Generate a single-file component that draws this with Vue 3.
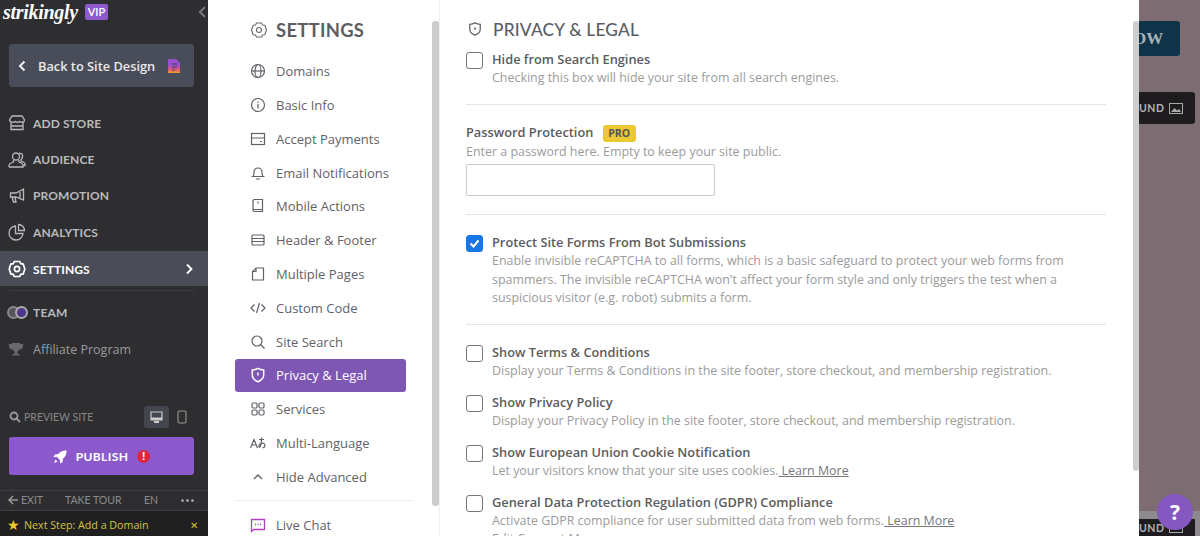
<template>
  <div class="page">
    <aside class="sidebar">
      <div class="brand">
        <span class="logo">strikingly</span>
        <span class="vip">VIP</span>
        <svg class="collapse" width="10" height="14" viewBox="0 0 10 14"><path d="M8 2 3 7l5 5" fill="none" stroke="#77797d" stroke-width="2"/></svg>
      </div>
      <button class="back">
        <svg width="10" height="14" viewBox="0 0 10 14"><path d="M7.5 2.5 3 7l4.500 4.500" fill="none" stroke="#eee" stroke-width="2"/></svg>
        <span>Back to Site Design</span>
        <svg class="page-ico" width="14" height="16" viewBox="0 0 14 16">
          <defs>
            <linearGradient id="pg" x1="0" y1="0" x2="0" y2="1">
              <stop offset="0.45" stop-color="#9a4fd0"/>
              <stop offset="0.75" stop-color="#e0567a"/>
              <stop offset="1" stop-color="#f0a030"/>
            </linearGradient>
          </defs>
          <path d="M1 1h8l4 4v10H1z" fill="url(#pg)"/>
          <path d="M5 6h5M5 9h5M5 12h3" stroke="#3a3d4a" stroke-width="1"/>
        </svg>
      </button>

      <nav class="main-nav">
        <a v-for="item in mainNav" :key="item.label" class="main-item" :class="{ active: item.active }">
          <svg width="18" height="18" viewBox="0 0 18 18" fill="none" stroke="currentColor" stroke-width="1.300" v-html="item.icon"></svg>
          <span>{{ item.label }}</span>
          <svg v-if="item.active" class="go" width="8" height="12" viewBox="0 0 8 12"><path d="M2 1.500 6.500 6 2 10.500" fill="none" stroke="#fff" stroke-width="1.800"/></svg>
        </a>
      </nav>
      <div class="side-sep"></div>
      <a class="team">
        <span class="avatars"><i class="av a1"></i><i class="av a2"></i></span>
        <span>TEAM</span>
      </a>
      <a class="affiliate">
        <svg width="16" height="16" viewBox="0 0 16 16" fill="#66686b"><path d="M4 1h8v1h3v2.500c0 1.500-1.200 2.800-3.300 3-.6 1-1.400 1.600-2.200 1.800V12h2v1.500H4.500V12h2V9.300c-.8-.2-1.600-.8-2.200-1.800C2.200 7.300 1 6 1 4.500V2h3z"/></svg>
        <span>Affiliate Program</span>
      </a>

      <div class="preview">
        <svg width="12" height="12" viewBox="0 0 12 12" fill="none" stroke="#9a9b9e" stroke-width="1.800"><circle cx="5" cy="5" r="3.500"/><path d="m7.500 7.500 3.500 3.500"/></svg>
        <span class="preview-text">PREVIEW SITE</span>
        <span class="device on">
          <svg width="13" height="13" viewBox="0 0 13 13"><path d="M1 1h11v8H1z" fill="none" stroke="#ccc" stroke-width="1.200"/><path d="M1 6.500h11V9H1zM4 10h5v2H4z" fill="#ccc"/></svg>
        </span>
        <span class="device">
          <svg width="10" height="14" viewBox="0 0 10 14"><rect x="1" y="1" width="8" height="12" rx="1.500" fill="none" stroke="#999" stroke-width="1.100"/></svg>
        </span>
      </div>
      <button class="publish">
        <svg width="14" height="14" viewBox="0 0 14 14" fill="#fff"><path d="M13.500.5c.2 3.500-1 6.300-3.500 8.200L9.500 12 7 13.500V10L4 7H.5L2 4.500l3.300-.5C7.200 1.500 10 .3 13.500.5z"/><path d="M2.500 9.500 1 13l3.500-1.500z"/></svg>
        <span>PUBLISH</span>
        <i class="alert">!</i>
      </button>
      <div class="tools">
        <span class="exit">
          <svg width="10" height="10" viewBox="0 0 10 10" fill="none" stroke="#999" stroke-width="1.500"><path d="M5 1 1 5l4 4M1 5h9"/></svg>
          EXIT
        </span>
        <span>TAKE TOUR</span>
        <span>EN</span>
        <span class="dots"><i></i><i></i><i></i></span>
      </div>
      <div class="next">
        <span class="star">★</span>
        <span class="next-text">Next Step: Add a Domain</span>
        <span class="close">✕</span>
      </div>
    </aside>

    <section class="modal">
      <div class="settings-nav">
        <h2 class="settings-title">
          <svg width="18" height="18" viewBox="0 0 18 18" fill="none" stroke="#666" stroke-width="1.100"><path d="M6.500 2h5l1 2 2.300.3L16.500 9l-1.700 4.700-2.300.3-1 2h-5l-1-2-2.300-.3L1.500 9l1.700-4.700L5.500 4z"/><circle cx="9" cy="9" r="2.500"/></svg>
          <span>SETTINGS</span>
        </h2>
        <a v-for="item in settingsNav" :key="item.label" class="set-item" :class="{ active: item.active }">
          <svg width="16" height="16" viewBox="0 0 16 16" fill="none" stroke="currentColor" stroke-width="1.200" v-html="item.icon"></svg>
          <span>{{ item.label }}</span>
        </a>
        <div class="set-sep"></div>
        <a class="set-item">
          <svg width="16" height="16" viewBox="0 0 16 16" fill="none" stroke="#b13fc0" stroke-width="1.300"><path d="M1.500 2.500h13v10H4l-2.500 2z"/><path d="M5 7.500h1M7.500 7.500h1M10 7.500h1" stroke="#7a4fc0"/></svg>
          <span>Live Chat</span>
        </a>
        <div class="thumb nav-thumb"></div>
      </div>

      <div class="content">
        <h2 class="content-title">
          <svg width="14" height="14" viewBox="0 0 16 16" fill="none" stroke="#666" stroke-width="1.500"><path d="M8 1c2 1.200 3.800 1.600 6 1.700v5.500c0 3-2.500 5.500-6 6.800-3.500-1.300-6-3.800-6-6.800V2.700C4.200 2.600 6 2.200 8 1z"/><path d="M8 6v3"/></svg>
          <span>PRIVACY &amp; LEGAL</span>
        </h2>

        <label class="check first">
          <i class="box"></i>
          <span>
            <b>Hide from Search Engines</b>
            <small>Checking this box will hide your site from all search engines.</small>
          </span>
        </label>
        <hr class="first-line" />

        <div class="password">
          <b>Password Protection <em class="pro">PRO</em></b>
          <small>Enter a password here. Empty to keep your site public.</small>
          <input class="pass-input" type="text" />
        </div>
        <hr class="second-line" />

        <label class="check recaptcha">
          <i class="box on">
            <svg width="13" height="13" viewBox="0 0 13 13"><path d="m2.500 6.500 3 3 5-6" fill="none" stroke="#fff" stroke-width="2"/></svg>
          </i>
          <span>
            <b>Protect Site Forms From Bot Submissions</b>
            <small>Enable invisible reCAPTCHA to all forms, which is a basic safeguard to protect your web forms from spammers. The invisible reCAPTCHA won't affect your form style and only triggers the test when a suspicious visitor (e.g. robot) submits a form.</small>
          </span>
        </label>
        <hr class="third-line" />

        <div class="list">
          <label v-for="row in checks" :key="row.title" class="check">
            <i class="box"></i>
            <span>
              <b>{{ row.title }}</b>
              <small>{{ row.text }}<a v-if="row.more" class="more"> Learn More</a></small>
              <small v-if="row.extra">{{ row.extra }}</small>
            </span>
          </label>
        </div>
        <div class="thumb content-thumb"></div>
      </div>
    </section>

    <div class="backdrop">
      <span class="cta"><span>OW</span></span>
      <span class="bg-btn">
        <span>UND</span>
        <svg width="14" height="11" viewBox="0 0 14 11"><rect x=".5" y=".5" width="13" height="10" fill="none" stroke="#aaa"/><path d="m2 9 3.500-4 2.500 2.500L10 6l2 3z" fill="#aaa"/></svg>
      </span>
      <div class="bottom-band">
        <span class="bg-btn low">
          <span>UND</span>
          <svg width="14" height="11" viewBox="0 0 14 11"><rect x=".5" y=".5" width="13" height="10" fill="none" stroke="#aaa"/></svg>
        </span>
      </div>
      <span class="help">?</span>
    </div>
  </div>
</template>

<script setup>
const mainNav = [
  { label: 'ADD STORE', icon: '<path d="M4 2h10l2.500 4c0 1.500-1.300 2.200-2.500 2-1 .4-2 .3-2.500-.5-1 1-3 1-4 0-.5.8-1.500.9-2.500.500C3 8.200 1.500 7.500 1.500 6zM3 8.500V15.500h12V8.500M3 12h12"/>' },
  { label: 'AUDIENCE', icon: '<circle cx="8" cy="5.500" r="3.500"/><path d="M1 16v-1.500c0-2 3-3 4.500-3.500V9M11 9v2c1.500.5 4 1.500 4 3.500V16H1M11 2.500c3-.5 4 1 3.500 3.500-.2 1-.7 2-1.500 2.500V10c1.500.5 4 1.500 4 3v1.500h-2"/>' },
  { label: 'PROMOTION', icon: '<path d="M15.500 2v11L8 10H2.500V6H8zM4 10l1.500 5H8l-1-5M12 3.500v8"/>' },
  { label: 'ANALYTICS', icon: '<path d="M7.500 3a7 7 0 1 0 7.500 7.500H7.500z"/><path d="M10.500 1.500a6 6 0 0 1 6 6h-6z"/>' },
  { label: 'SETTINGS', active: true, icon: '<path stroke-width="1.700" d="M6.300 1.500h5.400l1.100 2.200 2.400.4L16.800 9l-1.600 4.900-2.400.4-1.100 2.200H6.300l-1.100-2.200-2.400-.4L1.200 9l1.600-4.900 2.400-.4z"/><circle stroke-width="1.700" cx="9" cy="9" r="2.600"/>' },
]

const settingsNav = [
  { label: 'Domains', icon: '<circle cx="8" cy="8" r="6.500"/><ellipse cx="8" cy="8" rx="3" ry="6.500"/><path d="M1.500 8h13"/>' },
  { label: 'Basic Info', icon: '<circle cx="8" cy="8" r="6.500"/><path d="M8 7v4.500M8 4.500v1.200"/>' },
  { label: 'Accept Payments', icon: '<rect x="1.500" y="2.500" width="13" height="11"/><path d="M1.500 7h13M10 10.500h2"/>' },
  { label: 'Email Notifications', icon: '<path d="M3 11.500c1-1 1-2.500 1-4.500a4 4 0 0 1 8 0c0 2 0 3.500 1 4.500zM1.500 11.500h13M6 14h4"/>' },
  { label: 'Mobile Actions', icon: '<path d="M4 1.500h8.500v12H4.500a1.500 1.500 0 0 1-1.500-1.500V2.500zM3 11.500h9.500M8 3.500v2"/>' },
  { label: 'Header & Footer', icon: '<rect x="2" y="3" width="12" height="10" rx="1"/><path d="M2 6.500h12M2 9.500h12"/>' },
  { label: 'Multiple Pages', icon: '<path d="M6 2h7.500v12h-11V5.500zM6 2v3.500H2.500"/>' },
  { label: 'Custom Code', icon: '<path d="M4.500 4.500 1 8l3.500 3.500M11.500 4.500 15 8l-3.500 3.500M9.500 3l-3 10"/>' },
  { label: 'Site Search', icon: '<circle cx="7" cy="7" r="5"/><path d="m10.500 10.500 4 4"/>' },
  { label: 'Privacy & Legal', active: true, icon: '<path stroke-width="1.500" d="M8 1.300c2 1.200 3.800 1.600 5.700 1.700v5c0 3-2.200 5.300-5.700 6.700C4.500 13.300 2.300 11 2.300 8V3C4.200 2.900 6 2.500 8 1.300z"/><path stroke-width="1.500" d="M8 5.500v3"/>' },
  { label: 'Services', icon: '<rect x="2" y="2" width="5" height="5" rx="1.200"/><rect x="9" y="2" width="5" height="5" rx="1.200"/><rect x="2" y="9" width="5" height="5" rx="1.200"/><rect x="9" y="9" width="5" height="5" rx="1.200"/>' },
  { label: 'Multi-Language', icon: '<path d="M.5 13 4 4.500 7.500 13M2 10h4M9 4.500h5M11.500 2.500c0 4-.5 8-1.500 9.500-1 1-1.500-1-.5-2.500 1.500-2 5-2 5.500.5.200 1.500-1 2.500-2.500 3"/>' },
  { label: 'Hide Advanced', icon: '<path stroke-width="1.400" d="M4 10l4-4 4 4"/>' },
]

const checks = [
  { title: 'Show Terms & Conditions', text: 'Display your Terms & Conditions in the site footer, store checkout, and membership registration.' },
  { title: 'Show Privacy Policy', text: 'Display your Privacy Policy in the site footer, store checkout, and membership registration.' },
  { title: 'Show European Union Cookie Notification', text: 'Let your visitors know that your site uses cookies.', more: true },
  { title: 'General Data Protection Regulation (GDPR) Compliance', text: 'Activate GDPR compliance for user submitted data from web forms.', more: true, extra: 'Edit Consent Message' },
]
</script>

<style>
html, body { margin: 0; overflow: hidden; }
</style>

<style scoped>
.page {
  display: flex;
  width: 1200px;
  height: 536px;
  overflow: hidden;
  font-family: "Open Sans", sans-serif;
}

/* left dark bar */
.sidebar {
  width: 208px;
  flex: none;
  height: 536px;
  background: #2e2e30;
  display: flex;
  flex-direction: column;
  color: #c4c5c8;
}
.brand {
  display: flex;
  align-items: center;
  height: 24px;
  padding-left: 3px;
}
.logo {
  font-family: "Liberation Serif", serif;
  font-style: italic;
  font-weight: 700;
  font-size: 20px;
  color: #fff;
  width: 82px;
  letter-spacing: -0.3px;
}
.vip {
  background: #8e5acd;
  color: #fff;
  font: 600 11px "Lato", sans-serif;
  width: 23px;
  height: 16px;
  line-height: 16px;
  text-align: center;
  border-radius: 2px;
}
.collapse { margin-left: 89px; }
.back {
  margin: 20px 14px 0 9px;
  height: 43px;
  background: #494d59;
  border: 0;
  border-radius: 3px;
  display: flex;
  align-items: center;
  padding: 0 0 0 8px;
  color: #e8e8ea;
  font: 600 12.800px "Open Sans", sans-serif;
}
.back span { margin-left: 11px; width: 129px; text-align: left; white-space: nowrap; }
.main-nav {
  margin-top: 18px;
  display: flex;
  flex-direction: column;
}
.main-item {
  height: 36.4px;
  display: flex;
  align-items: center;
  padding-left: 8px;
  font: 700 12px "Lato", sans-serif;
  letter-spacing: 0.1px;
  color: #b9babd;
}
.main-item span { margin-left: 7px; }
.main-item.active {
  background: #4a4d58;
  color: #fff;
  height: 35px;
  box-sizing: border-box;
  padding-top: 2px;
}
.go { margin-left: auto; margin-right: 15px; }
.side-sep {
  height: 1px;
  background: #3d3e41;
  margin: 4px 14px 0 9px;
}
.team {
  display: flex;
  align-items: center;
  margin-top: 12px;
  height: 20px;
  padding-left: 7px;
  font: 700 12px "Lato", sans-serif;
  color: #b9babd;
  letter-spacing: 0.2px;
}
.avatars { display: flex; width: 26px; }
.av { width: 13px; height: 13px; border-radius: 50%; display: block; box-sizing: border-box; }
.a1 { background: #55565a; border: 2px solid #88898c; }
.a2 { background: #50358c; border: 2px solid #a9a9ac; margin-left: -5px; }
.affiliate {
  display: flex;
  align-items: center;
  margin-top: 17px;
  padding-left: 8px;
  height: 20px;
  font-size: 12.500px;
  color: #9a9b9e;
}
.affiliate span { margin-left: 9px; }
.preview {
  margin-top: auto;
  display: flex;
  align-items: center;
  padding-left: 9px;
  height: 22px;
}
.preview-text {
  font: 400 10.500px "Lato", sans-serif;
  color: #85868a;
  margin-left: 3px;
  width: 120px;
}
.device {
  width: 25px;
  height: 22px;
  display: flex;
  align-items: center;
  justify-content: center;
  border-radius: 3px;
}
.device.on { background: #43464f; }
.publish {
  margin: 9px 14px 0 9px;
  height: 38px;
  border: 0;
  border-radius: 3px;
  background: #8c59cd;
  color: #fff;
  display: flex;
  align-items: center;
  justify-content: center;
  font: 700 12px "Lato", sans-serif;
  letter-spacing: 0.4px;
  padding: 1px 0 0;
}
.publish span { margin: 0 9px 0 9px; }
.alert {
  width: 13px;
  height: 13px;
  background: #e0263c;
  border-radius: 50%;
  font: 700 10px/13px "Open Sans", sans-serif;
  text-align: center;
}
.tools {
  margin-top: 15px;
  height: 21px;
  box-sizing: border-box;
  border-top: 1px solid #3c3d40;
  border-bottom: 1px solid #3c3d40;
  display: flex;
  align-items: center;
  padding: 0 0 1px 8px;
  font: 400 10.500px "Lato", sans-serif;
  color: #8a8b8e;
}
.exit { display: flex; align-items: center; gap: 3px; width: 57px; }
.tools span:nth-child(2) { width: 79px; }
.tools span:nth-child(3) { width: 37px; }
.dots { display: flex; gap: 2px; }
.dots i { width: 3px; height: 3px; background: #9a9b9e; border-radius: 50%; }
.next {
  height: 25px;
  box-sizing: border-box;
  padding: 2px 0 0 7px;
  flex: none;
  background: #202021;
  display: flex;
  align-items: center;
  color: #d5c23e;
  font-size: 10.700px;
}
.star { font-size: 14px; color: #f0c92e; width: 17px; }
.next-text { width: 166px; white-space: nowrap; }
.close { font-size: 10px; }

/* white settings panel */
.modal {
  width: 931px;
  flex: none;
  background: #fff;
  display: flex;
  height: 536px;
  position: relative;
  overflow: hidden;
}
.settings-nav {
  width: 232px;
  flex: none;
  box-sizing: border-box;
  padding: 0 33px 0 27px;
  border-right: 1px solid #eeeeee;
  position: relative;
  color: #5f6268;
}
.settings-title {
  margin: 0;
  height: 54.400px;
  display: flex;
  align-items: center;
  padding-left: 15px;
  padding-top: 6px;
  box-sizing: border-box;
  font: 700 18.400px "Lato", sans-serif;
  color: #5c5e63;
  letter-spacing: 0.3px;
}
.settings-title span { margin-left: 8px; }
.set-item {
  height: 33.800px;
  display: flex;
  align-items: center;
  padding-left: 15px;
  border-radius: 3px;
  font-size: 13px;
  font-weight: 500;
}
.set-item span { margin-left: 10px; white-space: nowrap; }
.set-item.active {
  background: #7e57b5;
  color: #fff;
}
.set-sep {
  height: 1px;
  background: #eee;
  margin: 6px -7px 7px 0;
}
.thumb {
  position: absolute;
  width: 7px;
  background: #cdcdcd;
  border-radius: 3px;
}
.nav-thumb { top: 21px; right: 0; height: 485px; }

.content {
  flex: 1;
  padding: 0 33px 0 26px;
  position: relative;
  color: #9b9b9b;
  font-size: 12.450px;
  line-height: 18.500px;
}
.content-title {
  margin: 0;
  height: 43px;
  padding: 15px 0 0 2px;
  box-sizing: border-box;
  display: flex;
  align-items: center;
  font: 500 17.300px "Lato", sans-serif;
  color: #5c5e63;
  letter-spacing: 0.2px;
}
.content-title span { margin-left: 11px; }
.check {
  display: flex;
  gap: 9px;
}
.check > span { display: flex; flex-direction: column; min-width: 0; }
.check b, .password b {
  display: block;
  color: #5a5c60;
  font-size: 12.800px;
  font-weight: 600;
  line-height: 18px;
  margin-bottom: 1px;
}
small { display: block; font-size: 12.450px; }
.box {
  width: 17px;
  height: 17px;
  box-sizing: border-box;
  flex: none;
  border: 1px solid #767676;
  border-radius: 3px;
  margin-top: 2px;
  display: flex;
  align-items: center;
  justify-content: center;
}
.box.on { background: #1877e6; border-color: #1877e6; }
.first { padding-top: 7px; }
hr { border: 0; height: 1px; background: #e6e6e6; margin: 0; }
.first-line { margin-top: 16.500px; }
.password { padding-top: 18px; }
.password small { line-height: 18px; }
.pro {
  display: inline-block;
  font: 700 10.500px/17px "Open Sans", sans-serif;
  background: #edc835;
  color: #555;
  padding: 0 5.500px;
  border-radius: 3px;
  margin-left: 6px;
}
.pass-input {
  display: block;
  width: 249px;
  height: 32px;
  box-sizing: border-box;
  border: 1px solid #c9c9c9;
  border-radius: 2px;
  margin-top: 3px;
  outline: none;
}
.second-line { margin-top: 18px; }
.recaptcha { padding-top: 18px; }
.third-line { margin-top: 16.500px; }
.list {
  padding-top: 18px;
  display: flex;
  flex-direction: column;
  gap: 13px;
}
.list small { line-height: 18px; }
.more { color: #777; text-decoration: underline; }
.content-thumb { top: 21px; right: 0; width: 6px; height: 450px; }

/* what shows behind the panel */
.backdrop {
  flex: 1;
  background: #7d6d72;
  position: relative;
  overflow: hidden;
  display: flex;
  flex-direction: column;
  align-items: flex-start;
}
.cta {
  margin-top: 21px;
  width: 41px;
  height: 35px;
  background: #0f3348;
  border-radius: 0 3px 3px 0;
  font: 700 17px/35px "Liberation Serif", serif;
  color: #a8b4ba;
  text-indent: -6px;
  overflow: hidden;
}
.bg-btn {
  margin-top: 36px;
  width: 56px;
  height: 32px;
  background: #1e1c1e;
  border-radius: 0 3px 3px 0;
  display: flex;
  align-items: center;
  gap: 5px;
  color: #b4b4b4;
  font: 700 10.500px "Lato", sans-serif;
  letter-spacing: 0.5px;
}
.bottom-band {
  margin-top: auto;
  width: 100%;
  background: #8c8a8c;
  padding-top: 8px;
}
.bg-btn.low { margin: 0; height: 17px; border-radius: 0; }
.help {
  position: absolute;
  right: 7px;
  top: 494px;
  width: 36px;
  height: 36px;
  border-radius: 50%;
  background: #8458c0;
  color: #fff;
  font: 700 21px/36px "Open Sans", sans-serif;
  text-align: center;
}
</style>
